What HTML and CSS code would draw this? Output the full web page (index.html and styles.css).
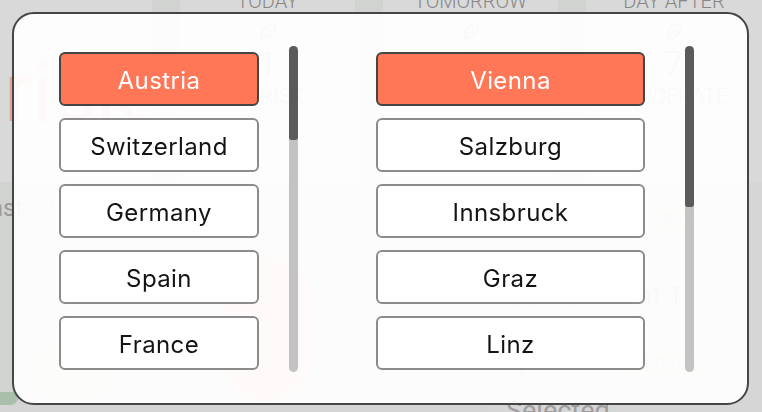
FILE: index.html
```html
<!DOCTYPE html>
<html>
<head>
<meta charset="utf-8">
<title>Choose location</title>
<link rel="stylesheet" href="styles.css">
</head>
<body>

<!-- dashboard, dimmed behind the location dialog -->
<div class="page">
  <div class="days">
    <div class="side-card">
      <div class="risk-word">risk</div>
    </div>
    <div class="day-card">
      <div class="day-label">TODAY</div>
      <svg class="leaf" viewBox="0 0 24 24"><path d="M5 20 C3 12 8 5 20 4 C20 14 14 20 5 20 Z M5 20 L13 11"/></svg>
      <div class="day-score">1</div>
      <div class="day-level">AT RISK</div>
    </div>
    <div class="day-card">
      <div class="day-label">TOMORROW</div>
      <svg class="leaf" viewBox="0 0 24 24"><path d="M5 20 C3 12 8 5 20 4 C20 14 14 20 5 20 Z M5 20 L13 11"/></svg>
      <div class="day-score">5</div>
      <div class="day-level">LOW</div>
    </div>
    <div class="day-card">
      <div class="day-label">DAY AFTER</div>
      <svg class="leaf" viewBox="0 0 24 24"><path d="M5 20 C3 12 8 5 20 4 C20 14 14 20 5 20 Z M5 20 L13 11"/></svg>
      <div class="day-score">7</div>
      <div class="day-level">MODERATE</div>
    </div>
  </div>

  <div class="lower">
    <div class="trend-panel">
      <div class="trend-line">
        <span class="trend-text">Forecast</span>
        <svg class="trend-icon" viewBox="0 0 24 16"><path d="M1 14 L8 7 L12 11 L22 2 M16 2 L22 2 L22 8"/></svg>
      </div>
      <div class="bars">
        <div class="bar bar-low" style="height:57px"></div>
        <div class="bar bar-mid" style="height:84px"></div>
        <div class="bar bar-high" style="height:147px"></div>
      </div>
      <div class="apply-tab"></div>
    </div>
    <div class="contaminants">
      <div class="contaminant">
        <div class="contaminant-head">
          <svg class="sprout" viewBox="0 0 24 40"><path d="M12 40 L12 14 M12 16 C12 8 18 4 24 4 C24 12 18 16 12 16 M12 20 C12 12 6 10 0 10 C0 18 6 20 12 20"/></svg>
          <span class="badge">HIGH</span>
        </div>
        <div class="contaminant-name">Selected<br>Contaminant 1</div>
      </div>
      <div class="contaminant">
        <div class="contaminant-head">
          <svg class="sprout" viewBox="0 0 24 40"><path d="M12 40 L12 14 M12 16 C12 8 18 4 24 4 C24 12 18 16 12 16 M12 20 C12 12 6 10 0 10 C0 18 6 20 12 20"/></svg>
          <span class="badge">MEDIUM</span>
        </div>
        <div class="contaminant-name">Selected<br>Contaminant 2</div>
      </div>
    </div>
  </div>
</div>

<!-- location dialog -->
<div class="dialog">
  <div class="picker picker-country">
    <div class="options">
      <div class="option selected">Austria</div>
      <div class="option">Switzerland</div>
      <div class="option">Germany</div>
      <div class="option">Spain</div>
      <div class="option">France</div>
      <div class="option">Italy</div>
      <div class="option">Belgium</div>
      <div class="option">Netherlands</div>
    </div>
    <div class="scrollbar"><div class="thumb thumb-country"></div></div>
  </div>
  <div class="picker picker-city">
    <div class="options">
      <div class="option selected">Vienna</div>
      <div class="option">Salzburg</div>
      <div class="option">Innsbruck</div>
      <div class="option">Graz</div>
      <div class="option">Linz</div>
      <div class="option">Klagenfurt</div>
    </div>
    <div class="scrollbar"><div class="thumb thumb-city"></div></div>
  </div>
</div>

</body>
</html>
```

FILE: styles.css
```css
body {
  margin: 0;
  width: 762px;
  height: 412px;
  overflow: hidden;
  background: #d0d3d0;
  font-family: "Roboto", "Liberation Sans", sans-serif;
}

/* dashboard (already dimmed by the dialog backdrop) */
.page { color: #a2a2a2; height: 412px; overflow: hidden; }

.days {
  display: grid;
  grid-template-columns: 152px 175px 175px 176px;
  column-gap: 28px;
  margin-top: -9px;
  height: 191px;
}
.side-card { background: #d9d9d9; padding-top: 60px; overflow: hidden; }
.risk-word {
  font-size: 84px;
  line-height: 84px;
  padding-left: 4px;
  color: #e2a595;
}

.day-card {
  background: #d9d9d9;
  display: flex;
  flex-direction: column;
  align-items: center;
}
.day-label { font-size: 20px; font-weight: 300; line-height: 21px; color: #878787; }
.leaf { width: 22px; height: 22px; margin-top: 8px; fill: none; stroke: #a0a0a0; stroke-width: 1.5; }
.day-score { font-size: 34px; font-weight: 300; line-height: 34px; margin-top: 4px; }
.day-level { font-size: 21px; font-weight: 300; margin-top: 4px; }

.lower { display: flex; height: 230px; }

.trend-panel {
  width: 486px;
  display: flex;
  flex-direction: column;
  position: relative;
  border-bottom: 7px solid #d5d5d5;
}
.trend-line {
  display: flex;
  align-items: center;
  gap: 8px;
  margin-left: -70px;
  margin-top: 12px;
  font-size: 24px;
  color: #9a9a9a;
}
.trend-icon { width: 24px; height: 16px; fill: none; stroke: #b0b0b0; stroke-width: 1.5; }
.bars {
  display: flex;
  align-items: flex-end;
  gap: 9px;
  padding-left: 26px;
  margin-top: auto;
  margin-bottom: 3px;
}
.bar { width: 89px; border-radius: 44px; }
.bar-low { background: #cdd6c8; }
.bar-mid { background: #d8ccce; }
.bar-high { background: #e6bcb2; }
.apply-tab {
  position: absolute;
  left: -20px;
  bottom: 0;
  width: 38px;
  height: 13px;
  border-radius: 0 0 8px 8px;
  background: #a9bfa9;
}

.contaminants { flex: 1; background: #d6d6d6; padding: 13px 58px 0 20px; }
.contaminant { height: 145px; }
.contaminant-head { display: flex; justify-content: space-between; align-items: flex-start; }
.sprout { width: 22px; height: 38px; fill: none; stroke: #a8a8a8; stroke-width: 1.5; margin-left: 4px; }
.badge {
  margin-top: 10px;
  padding: 3px 8px;
  border-radius: 10px;
  background: #cfcbc8;
  color: #b8b8b8;
  font-size: 17px;
}
.contaminant-name { font-size: 27px; line-height: 30px; margin-top: 18px; color: #9e9e9e; }

/* location dialog */
.dialog {
  position: fixed;
  left: 12px;
  top: 12px;
  width: 737px;
  height: 393px;
  box-sizing: border-box;
  border: 2px solid #454545;
  border-radius: 22px;
  background: rgba(255, 255, 255, 0.93);
  display: flex;
  padding: 32px 0 0 45px;
  font-family: "Inter", "Liberation Sans", sans-serif;
}

.picker { display: flex; height: 326px; }
.picker-country { gap: 30px; }
.picker-country .options { width: 200px; }
.picker-city { gap: 40px; margin-left: 78px; }
.picker-city .options { width: 269px; }

.options {
  overflow: hidden;
  padding-top: 6px;
  display: flex;
  flex-direction: column;
  gap: 12px;
}
.option {
  flex: none;
  height: 54px;
  box-sizing: border-box;
  border: 2px solid #8b8b8b;
  border-radius: 6px;
  background: #fff;
  display: flex;
  align-items: center;
  justify-content: center;
  padding-top: 2px;
  font-size: 24px;
  letter-spacing: 0.4px;
  color: #141414;
}
.option.selected {
  background: #ff7757;
  border-color: #454545;
  color: #fff;
}

.scrollbar {
  width: 9px;
  height: 326px;
  border-radius: 5px;
  background: #c3c3c3;
}
.thumb { background: #5b5b5b; border-radius: 5px 5px 3px 3px; }
.thumb-country { height: 94px; }
.thumb-city { height: 161px; }
```
